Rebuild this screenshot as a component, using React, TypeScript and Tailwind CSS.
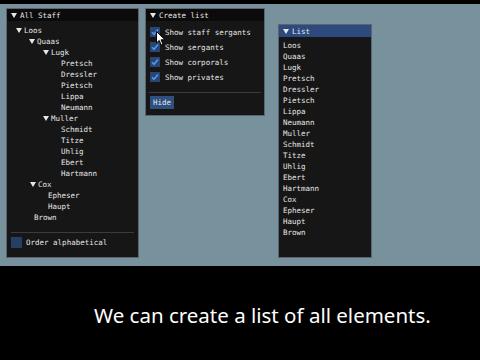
import React from "react";

const mono = { fontFamily: '"DejaVu Sans Mono", "Liberation Mono", monospace' };

function Tri() {
  return (
    <svg width="6" height="5" viewBox="0 0 6 5" className="shrink-0">
      <path d="M0 0 H6 L3 5 Z" fill="#e6e6e6" />
    </svg>
  );
}

function Node({ label, indent, open }: { label: string; indent: number; open?: boolean }) {
  return (
    <div className="flex h-[11px] items-center" style={{ paddingLeft: indent }}>
      {open ? (
        <span className="flex w-[8px] items-center">
          <Tri />
        </span>
      ) : null}
      <span>{label}</span>
    </div>
  );
}

function Check() {
  return (
    <span className="flex h-[10px] w-[10px] items-center justify-center bg-[#2a4670]">
      <svg width="8" height="8" viewBox="0 0 8 8">
        <path d="M1 4.2 L3 6.2 L7 1.5" stroke="#4d9bf0" strokeWidth="1.6" fill="none" />
      </svg>
    </span>
  );
}

const listItems = [
  "Loos", "Quaas", "Lugk", "Pretsch", "Dressler", "Pietsch", "Lippa", "Neumann", "Muller",
  "Schmidt", "Titze", "Uhlig", "Ebert", "Hartmann", "Cox", "Epheser", "Haupt", "Brown",
];

export default function App() {
  return (
    <div className="relative h-[360px] w-[480px] overflow-hidden bg-black">
      <div className="absolute left-0 top-[4px] h-[262px] w-[480px] bg-[#77929d]" />

      {/* All Staff window */}
      <div
        className="absolute left-[6px] top-[8px] flex h-[250px] w-[133px] flex-col border border-[#5c6470] bg-[#161616] text-[7.5px] leading-[11px] text-[#e8e8e8]"
        style={mono}
      >
        <div className="flex h-[12px] items-center gap-[3px] bg-[#0b0b0b] pl-[4px]">
          <Tri />
          <span>All Staff</span>
        </div>
        <div className="flex flex-col pt-[4px]">
          <Node label="Loos" indent={9} open />
          <Node label="Quaas" indent={22} open />
          <Node label="Lugk" indent={36} open />
          <Node label="Pretsch" indent={54} />
          <Node label="Dressler" indent={54} />
          <Node label="Pietsch" indent={54} />
          <Node label="Lippa" indent={54} />
          <Node label="Neumann" indent={54} />
          <Node label="Muller" indent={36} open />
          <Node label="Schmidt" indent={54} />
          <Node label="Titze" indent={54} />
          <Node label="Uhlig" indent={54} />
          <Node label="Ebert" indent={54} />
          <Node label="Hartmann" indent={54} />
          <Node label="Cox" indent={23} open />
          <Node label="Epheser" indent={41} />
          <Node label="Haupt" indent={41} />
          <Node label="Brown" indent={27} />
        </div>
        <div className="mx-[4px] mt-[9px] h-px bg-[#3a3a44]" />
        <div className="flex h-[11px] items-center gap-[4px] pl-[4px] mt-[4px]">
          <span className="h-[11px] w-[11px] bg-[#253f63]" />
          <span>Order alphabetical</span>
        </div>
      </div>

      {/* Create list window */}
      <div
        className="absolute left-[145px] top-[8px] flex h-[108px] w-[120px] flex-col border border-[#5c6470] bg-[#161616] text-[7.5px] leading-[11px] text-[#e8e8e8]"
        style={mono}
      >
        <div className="flex h-[12px] items-center gap-[3px] bg-[#0b0b0b] pl-[4px]">
          <Tri />
          <span>Create list</span>
        </div>
        <div className="flex flex-col gap-[5px] pl-[4px] pt-[6px]">
          {["Show staff sergants", "Show sergants", "Show corporals", "Show privates"].map((t) => (
            <div key={t} className="flex h-[10px] items-center gap-[5px]">
              <Check />
              <span>{t}</span>
            </div>
          ))}
        </div>
        <div className="mx-[3px] mt-[10px] h-px bg-[#3a3a44]" />
        <div className="pl-[4px] pt-[3px]">
          <span className="inline-flex h-[13px] items-center bg-[#2d5080] px-[3px]">Hide</span>
        </div>
      </div>

      {/* List window */}
      <div
        className="absolute left-[278px] top-[24px] flex h-[234px] w-[94px] flex-col border border-[#5c6470] bg-[#161616] text-[7.5px] leading-[11px] text-[#e8e8e8]"
        style={mono}
      >
        <div className="flex h-[12px] items-center gap-[3px] bg-[#2c4a7e] pl-[4px]">
          <Tri />
          <span>List</span>
        </div>
        <div className="flex flex-col pl-[4px] pt-[3px]">
          {listItems.map((t) => (
            <div key={t} className="h-[11px]">
              {t}
            </div>
          ))}
        </div>
      </div>

      {/* mouse cursor */}
      <svg className="absolute left-[156px] top-[31px]" width="10" height="15" viewBox="0 0 10 15">
        <path d="M0.5 0.5 L0.5 12 L3.2 9.4 L5.2 14 L7 13.2 L5 8.8 L9 8.8 Z" fill="#ffffff" stroke="#000000" strokeWidth="1" />
      </svg>

      {/* caption */}
      <div
        className="absolute left-[94px] top-[302px] whitespace-nowrap text-[20.5px] leading-[26px] text-white"
        style={{ fontFamily: '"Noto Sans", "DejaVu Sans", sans-serif' }}
      >
        We can create a list of all elements.
      </div>
    </div>
  );
}
